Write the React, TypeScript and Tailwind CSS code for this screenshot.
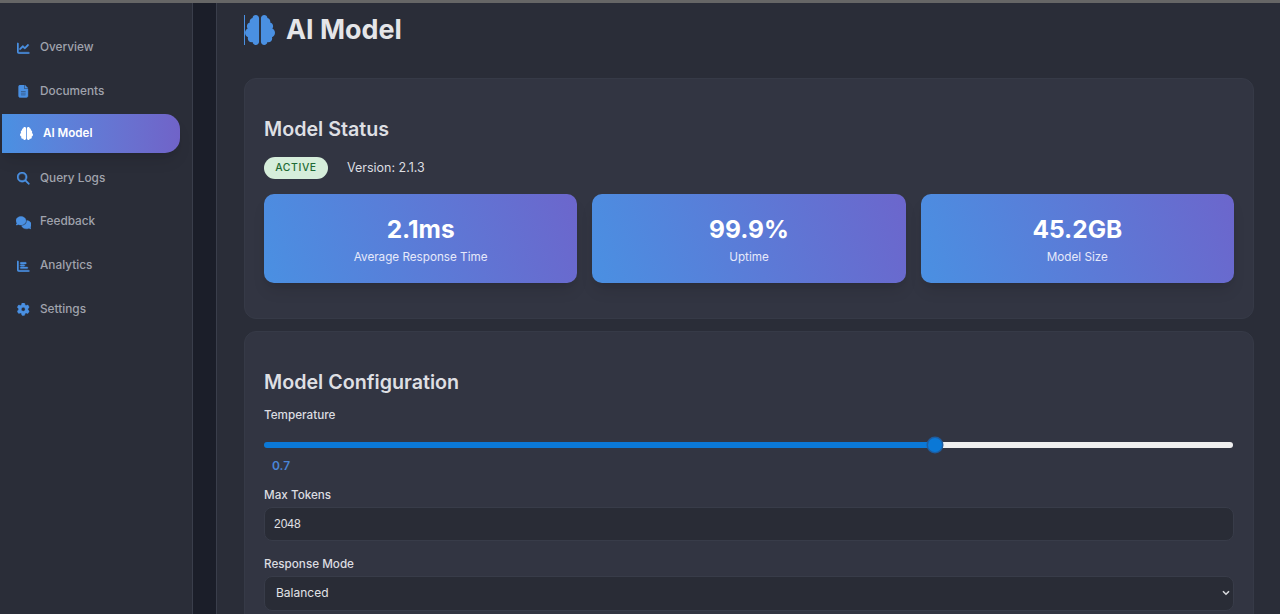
import { FaBrain, FaChartBar, FaChartLine, FaComments, FaFileLines, FaGear, FaMagnifyingGlass } from 'react-icons/fa6';

const navItems = [
  { label: 'Overview', icon: FaChartLine, size: 'w-[12.5px] h-[12.5px]' },
  { label: 'Documents', icon: FaFileLines, size: 'w-[12.5px] h-[12.5px]' },
  { label: 'AI Model', icon: FaBrain, size: 'w-[13px] h-[13px]', active: true },
  { label: 'Query Logs', icon: FaMagnifyingGlass, size: 'w-[12.5px] h-[12.5px]' },
  { label: 'Feedback', icon: FaComments, size: 'w-[15.4px] h-[15.4px]' },
  { label: 'Analytics', icon: FaChartBar, size: 'w-[12.5px] h-[12.5px]' },
  { label: 'Settings', icon: FaGear, size: 'w-[12.5px] h-[12.5px]' },
];

const stats = [
  { value: '2.1ms', label: 'Average Response Time' },
  { value: '99.9%', label: 'Uptime' },
  { value: '45.2GB', label: 'Model Size' },
];

const temperature = 0.695;

function Sidebar() {
  return (
    <aside className="w-[193px] shrink-0 bg-[#2a2d38] border-r border-[#3a3e4b] pt-[23px]">
      <nav className="flex flex-col">
        {navItems.map(item => {
          const Icon = item.icon;
          if (item.active) {
            return (
              <a
                key={item.label}
                className="ml-[2px] mr-[12px] mt-[0.6px] mb-[3.8px] h-[39px] flex items-center pl-[16px] gap-[10px] rounded-r-[15px] border-l-2 border-[#4a90e2] bg-gradient-to-r from-[#4a90e2] to-[#7063c8] text-white text-[11.6px] font-semibold shadow-lg"
              >
                <Icon className={item.size} />
                {item.label}
              </a>
            );
          }
          return (
            <a key={item.label} className="h-[43.7px] flex items-center pl-[17px] gap-[10px] text-[#a0a3ad] text-[11.8px] font-medium">
              <span className="w-[13px] flex justify-center">
                <Icon className={`${item.size} shrink-0 text-[#4a90e2]`} stroke="currentColor" strokeWidth={16} />
              </span>
              {item.label}
            </a>
          );
        })}
      </nav>
    </aside>
  );
}

function StatCard({ value, label }: { value: string; label: string }) {
  return (
    <div className="h-[89px] pt-[2px] rounded-[10px] bg-[linear-gradient(70deg,#4a90e2,#6c66cc)] flex flex-col items-center justify-center text-white shadow-lg">
      <div className="text-[24.5px] leading-[29px] font-bold">{value}</div>
      <div className="text-[11.7px] leading-[15px] mt-[6px] text-[#e6e9fa]">{label}</div>
    </div>
  );
}

export default function App() {
  return (
    <div className="h-[614px] overflow-hidden flex flex-col bg-[#2a2d38] text-[#e2e3e6]" style={{ fontFamily: 'Inter, sans-serif' }}>
      <div className="h-[3px] shrink-0 bg-[#666666]" />
      <div className="flex flex-1 min-h-0">
        <Sidebar />
        <div className="w-[24px] shrink-0 bg-[#1b1e29] border-r border-[#3a3e4b]" />
        <main className="flex-1 min-w-0 pl-[27px] pr-[26px]">
          <div className="flex items-center h-[55px] pb-[2px] text-[#e4e5e8]">
            <span className="w-[1px] h-[30px] bg-[#4a90e2]" />
            <FaBrain className="w-[30px] h-[30px] text-[#4a90e2]" />
            <h1 className="ml-[11px] text-[26.9px] font-bold leading-none">AI Model</h1>
          </div>

          <section className="mt-[20px] h-[241px] rounded-[12px] bg-[#323542] border border-[#363a47] px-[19px] pt-[39px]">
            <h2 className="text-[19.7px] leading-[23px] font-semibold text-[#dedfe3]">Model Status</h2>
            <div className="flex items-center mt-[16px] gap-[19px]">
              <span className="h-[22px] w-[64px] rounded-full bg-[#d6eedb] text-[#1f6b35] text-[10.4px] font-medium tracking-[0.6px] flex items-center justify-center">
                ACTIVE
              </span>
              <span className="text-[12.5px] text-[#dcdde1]">Version: 2.1.3</span>
            </div>
            <div className="grid grid-cols-3 gap-[15px] mt-[15px]">
              {stats.map(s => (
                <StatCard key={s.label} value={s.value} label={s.label} />
              ))}
            </div>
          </section>

          <section className="mt-[12px] rounded-[12px] bg-[#323542] border border-[#363a47] px-[19px] pt-[39px] pb-[20px]">
            <h2 className="text-[19.7px] leading-[23px] font-semibold text-[#dedfe3]">Model Configuration</h2>
            <label className="block mt-[14px] text-[11.7px] leading-[15px] font-medium text-[#dcdde1]">Temperature</label>
            <input
              type="range"
              min={0}
              max={1}
              step="any"
              defaultValue={temperature}
              className="block w-[969px] h-[6px] mt-[19px] rounded-full appearance-none [&::-webkit-slider-thumb]:appearance-none [&::-webkit-slider-thumb]:w-[14px] [&::-webkit-slider-thumb]:h-[14px] [&::-webkit-slider-thumb]:rounded-full [&::-webkit-slider-thumb]:bg-[#0b78d6] [&::-webkit-slider-thumb]:shadow-[0_0_0_1.5px_#1f5c9e]"
              style={{ background: `linear-gradient(to right, #0b78d6 ${temperature * 100}%, #efefef ${temperature * 100}%)` }}
            />
            <div className="mt-[10px] ml-[8px] text-[12px] leading-[15px] font-semibold text-[#4a85d8]">0.7</div>
            <label className="block mt-[15px] text-[11.7px] leading-[15px] font-medium text-[#dcdde1]">Max Tokens</label>
            <input
              defaultValue="2048"
              className="block w-full h-[34px] mt-[4px] px-[9px] rounded-[8px] bg-[#292c36] border border-[#383c49] text-[12px] text-[#e2e3e6] font-['Liberation_Sans',sans-serif]"
            />
            <label className="block mt-[16px] text-[11.7px] leading-[15px] font-medium text-[#dcdde1]">Response Mode</label>
            <div className="relative mt-[4px]">
              <select
                defaultValue="Balanced"
                className="block w-full h-[34.5px] pl-[11px] rounded-[8px] appearance-none bg-[#292c36] border border-[#383c49] text-[12px] text-[#e2e3e6]"
              >
                <option>Balanced</option>
                <option>Fast</option>
                <option>Accurate</option>
              </select>
              <svg className="absolute right-[4px] top-[14px] w-[8px] h-[6px] pointer-events-none" viewBox="0 0 8 6" fill="none" stroke="#d8d9dd" strokeWidth="1.6">
                <path d="M1 1.2 L4 4.2 L7 1.2" />
              </svg>
            </div>
          </section>
        </main>
      </div>
    </div>
  );
}
